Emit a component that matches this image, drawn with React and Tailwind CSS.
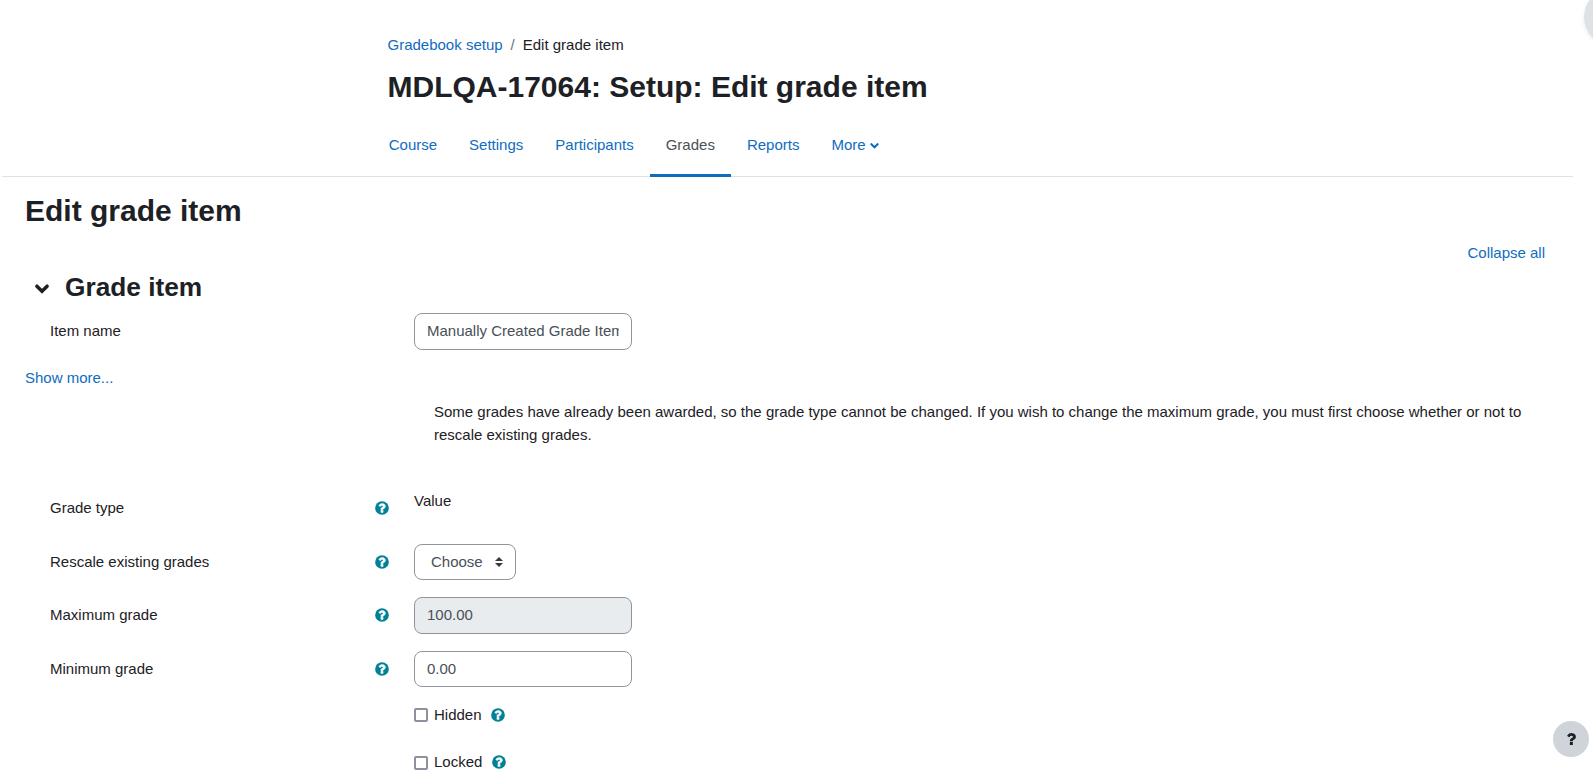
const LINK = "text-[#0f6cbf]";

const QUESTION =
  "M1024 1376v-192q0-14-9-23t-23-9h-192q-14 0-23 9t-9 23v192q0 14 9 23t23 9h192q14 0 23-9t9-23zm256-672q0-88-55.5-163t-138.5-116-170-41q-243 0-371 213-15 24 8 42l132 100q7 6 19 6 16 0 25-12 53-68 86-92 34-24 86-24 48 0 85.5 26t37.5 59q0 38-20 61t-68 45q-63 28-115.5 86.5t-52.5 125.5v36q0 14 9 23t23 9h192q14 0 23-9t9-23q0-19 21.5-49.5t54.5-49.5q32-18 49-28.5t46-35 44.5-48 28-60.5 12.5-81z";

function HelpIcon() {
  return (
    <svg viewBox="0 0 1792 1792" className="-mt-0.5 size-4 shrink-0">
      <circle cx="896" cy="896" r="768" className="fill-[#008196]" />
      <path d={QUESTION} fill="#fff" stroke="#fff" strokeWidth="50" />
    </svg>
  );
}

function Row({ label, help, className, children }) {
  return (
    <div className={`flex pl-[50px] ${className}`}>
      <div className="flex h-[37px] w-[364px] shrink-0 items-center justify-between pr-6">
        <span>{label}</span>
        {help && <HelpIcon />}
      </div>
      <div className="grow">{children}</div>
    </div>
  );
}

function Check({ label, className, boxClass = "" }) {
  return (
    <div className={`flex h-[23px] items-center pl-[414px] ${className}`}>
      <input
        type="checkbox"
        className={`size-3.5 appearance-none rounded-[2px] border-2 border-[#8f8f9d] bg-white ${boxClass}`}
      />
      <span className="ml-1.5 mr-[8.6px]">{label}</span>
      <HelpIcon />
    </div>
  );
}

const field =
  "block w-[218px] rounded-lg border border-[#8f959e] px-3 text-[#495057]";

const tabs = ["Course", "Settings", "Participants", "Grades", "Reports"];

export default function App() {
  return (
    <div className="relative h-[778px] w-full overflow-hidden bg-white font-['Liberation_Sans',Arial,sans-serif] text-[15px] leading-[22.5px] text-[#1d2125]">
      <header className="ml-0.5 mr-5 flex h-[177px] flex-col border-b border-[#dee2e6] pt-[34px]">
        <div className="flex gap-2 pl-[385.5px]">
          <a className={LINK}>Gradebook setup</a>
          <span className="text-[#6a737b]">/</span>
          <span>Edit grade item</span>
        </div>
        <h1 className="mt-3 pl-[385.5px] text-[30px] font-bold leading-9">MDLQA-17064: Setup: Edit grade item</h1>
        <nav className="-mb-px mt-auto flex pl-[370.75px]">
          {tabs.map((t) => (
            <a
              key={t}
              className={`flex h-[61px] items-center border-b-[3px] px-4 ${
                t === "Grades" ? "border-[#0f6cbf] text-[#495057]" : "border-transparent text-[#0f6cbf]"
              }`}
            >
              {t}
            </a>
          ))}
          <a className="flex h-[61px] items-center gap-1 border-b-[3px] border-transparent px-4 text-[#0f6cbf]">
            More
            <svg
              viewBox="0 0 9 6"
              className="mt-px h-1.5 w-[9px]"
              fill="none"
              stroke="currentColor"
              strokeWidth="2.1"
              strokeLinecap="round"
            >
              <path d="M1.4 1.2 4.5 4.2 7.6 1.2" />
            </svg>
          </a>
        </nav>
      </header>

      <main>
        <h2 className="mt-4 pl-[25px] text-[30px] font-bold leading-9">Edit grade item</h2>
        <div className="mt-[13px] flex justify-end pr-12">
          <a className={LINK}>Collapse all</a>
        </div>
        <div className="mt-[6px] flex h-8 items-center pl-[34px]">
          <svg
            viewBox="0 0 16 12"
            className="mt-[5px] h-3 w-4"
            fill="none"
            stroke="#1d2125"
            strokeWidth="3.5"
            strokeLinecap="round"
          >
            <path d="M2.9 3.2 8 8.2 13.1 3.2" />
          </svg>
          <h3 className="ml-[15px] text-[26.25px] font-bold leading-8">Grade item</h3>
        </div>

        <Row label="Item name" className="mt-[10px]">
          <input className={`${field} h-[37px] pb-px`} defaultValue="Manually Created Grade Item" />
        </Row>
        <a className={`mt-[17px] block pl-[25px] ${LINK}`}>Show more...</a>
        <p className="mt-[12px] pl-[434px] pr-[60px]">
          Some grades have already been awarded, so the grade type cannot be changed. If you wish to change the
          maximum grade, you must first choose whether or not to rescale existing grades.
        </p>

        <Row label="Grade type" help className="mt-[44px]">
          Value
        </Row>
        <Row label="Rescale existing grades" help className="mt-[17px]">
          <div className="flex h-9 w-[102px] items-center justify-between rounded-lg border border-[#8f959e] pl-4 pr-3 text-[#495057]">
            Choose
            <svg viewBox="0 0 8 10" className="h-[10px] w-2 fill-[#343a40]">
              <path d="M4 0 0 4h8zM4 10 0 6h8z" />
            </svg>
          </div>
        </Row>
        <Row label="Maximum grade" help className="mt-[16px]">
          <input className={`${field} h-[37px] bg-[#e9ecef] pb-[3px]`} defaultValue="100.00" />
        </Row>
        <Row label="Minimum grade" help className="mt-[17px]">
          <input className={`${field} h-9 pb-px`} defaultValue="0.00" />
        </Row>
        <Check label="Hidden" className="mt-4" boxClass="-mt-0.5" />
        <Check label="Locked" className="mt-[24px]" />
      </main>

      <div className="absolute -top-3 left-[1584px] size-[58px] rounded-full bg-[#dee2e6] shadow-[0_2px_4px_rgba(0,0,0,0.08)]" />
      <button className="absolute left-[1553px] top-[721px] flex size-9 items-center justify-center rounded-full bg-[#ced4da]">
        <svg viewBox="448 384 832 1024" className="h-3 w-[10px] fill-[#1d2125]">
          <path d={QUESTION} />
        </svg>
      </button>
    </div>
  );
}
